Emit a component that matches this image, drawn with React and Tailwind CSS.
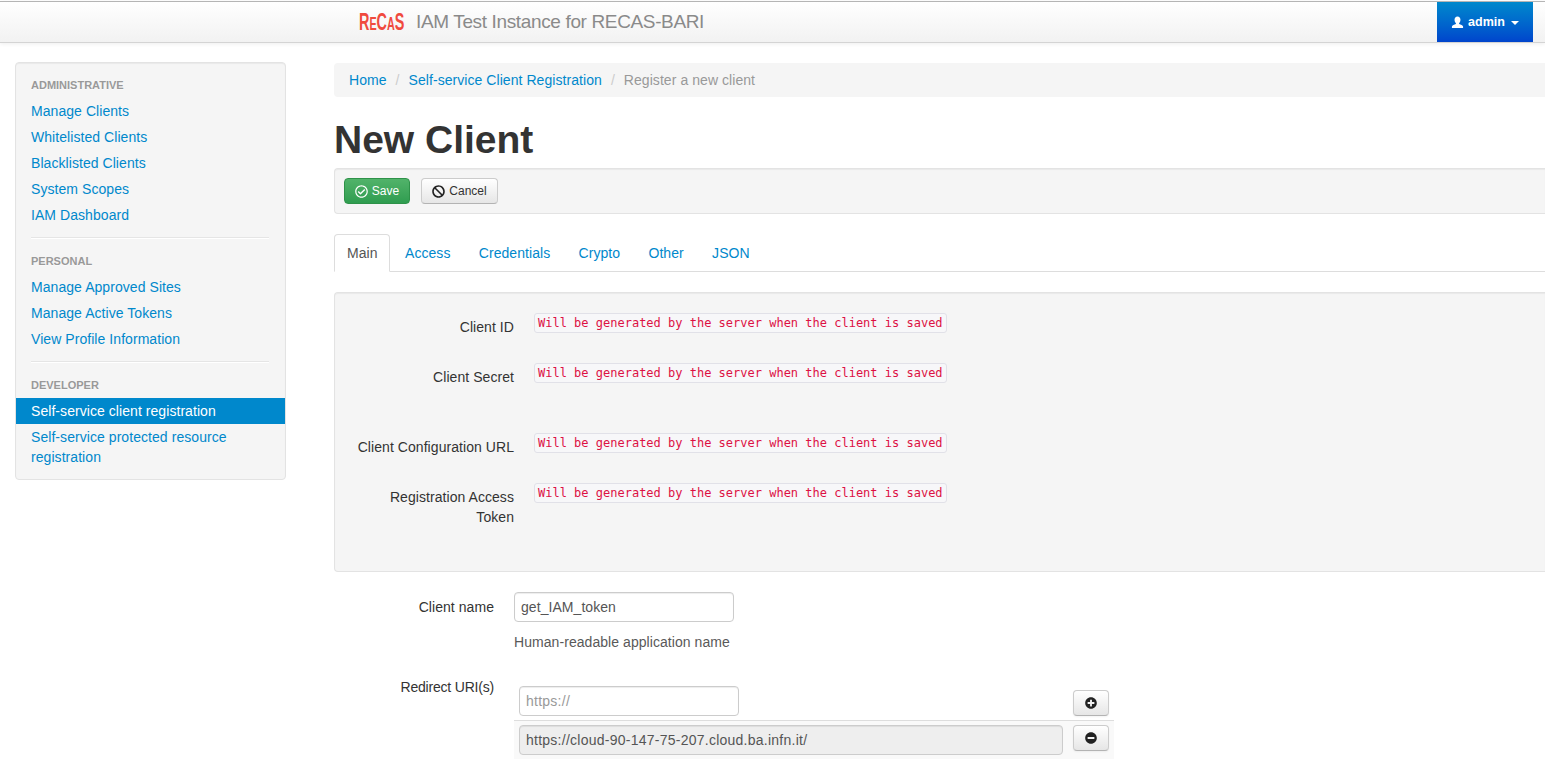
import { FaBan, FaMinusCircle, FaPlusCircle, FaRegCheckCircle } from 'react-icons/fa';

const sans = "font-['Liberation_Sans',Arial,sans-serif]";
const generated = 'Will be generated by the server when the client is saved';

const UserIcon = ({ className }) => (
	<svg viewBox="0 0 14 14" className={className} fill="currentColor">
		<path d="M7 0.5c-2 0-3.2 1.5-3.2 3.6 0 1.5 0.6 2.9 1.5 3.6v0.9c-1.6 0.7-4.3 1.4-4.3 2.8v1.6h12v-1.6c0-1.4-2.7-2.1-4.3-2.8v-0.9c0.9-0.7 1.5-2.1 1.5-3.6 0-2.1-1.2-3.6-3.2-3.6z" />
	</svg>
);

const NavHeader = ({ children }) => (
	<li className="h-[26px] px-[15px] text-[11px] leading-[26px] font-bold tracking-normal text-[#999] uppercase [text-shadow:0_1px_0_rgba(255,255,255,0.5)]">{children}</li>
);

const NavLink = ({ children, active }) => (
	<li className={`px-[15px] py-[3px] leading-5 ${active ? 'bg-[#0088cc] text-white' : 'text-[#0088cc]'}`}>{children}</li>
);

const Divider = () => <li className="my-[9px] mr-[16px] ml-[15px] h-[2px] border-t border-[#e5e5e5] bg-white"></li>;

const Sidebar = () => (
	<aside className="mt-[19px] ml-[15px] h-[418px] w-[271px] shrink-0 rounded border border-[#e3e3e3] bg-[#f5f5f5] pt-[9px] shadow-[inset_0_1px_1px_rgba(0,0,0,0.05)]">
		<ul>
			<NavHeader>Administrative</NavHeader>
			<NavLink>Manage Clients</NavLink>
			<NavLink>Whitelisted Clients</NavLink>
			<NavLink>Blacklisted Clients</NavLink>
			<NavLink>System Scopes</NavLink>
			<NavLink>IAM Dashboard</NavLink>
			<Divider />
			<NavHeader>Personal</NavHeader>
			<NavLink>Manage Approved Sites</NavLink>
			<NavLink>Manage Active Tokens</NavLink>
			<NavLink>View Profile Information</NavLink>
			<Divider />
			<NavHeader>Developer</NavHeader>
			<NavLink active>Self-service client registration</NavLink>
			<NavLink>Self-service protected resource registration</NavLink>
		</ul>
	</aside>
);

const ReadOnlyRow = ({ label, className }) => (
	<div className={`flex gap-5 ${className}`}>
		<div className="w-[179px] shrink-0 pt-[4px] pl-5 text-right leading-5 text-[#333]">{label}</div>
		<code className="h-5 rounded-[3px] border border-[#e1e1e8] bg-[#f7f7f9] px-[3px] font-['DejaVu_Sans_Mono',monospace] text-xs leading-[18px] tracking-normal text-[#dd1144]">{generated}</code>
	</div>
);

const SmallButton = ({ children, className }) => (
	<button className={`flex h-[26px] w-9 items-center justify-center rounded border border-[#ccc] border-b-[#b3b3b3] bg-gradient-to-b from-white to-[#e6e6e6] text-[#222] shadow-[inset_0_1px_0_rgba(255,255,255,0.2),0_1px_2px_rgba(0,0,0,0.05)] ${className}`}>{children}</button>
);

const App = () => {
	const tabs = ['Access', 'Credentials', 'Crypto', 'Other', 'JSON'];

	return (
		<div className={`h-[773px] overflow-hidden bg-white text-sm tracking-[0.06px] text-[#333] ${sans}`}>
			<header className="mt-px flex h-[42px] items-stretch border-t border-b border-t-[#b5b5b5] border-b-[#d4d4d4] bg-gradient-to-b from-white to-[#f2f2f2] shadow-[0_1px_4px_rgba(0,0,0,0.07)]">
				<div className="ml-[359px] flex items-center">
					<span className="w-[46px] origin-left scale-x-[0.6] text-[24px] leading-none font-bold tracking-normal whitespace-nowrap text-[#f04a3e]">
						R<span className="text-[18px]">E</span>C<span className="text-[18px]">A</span>S
					</span>
					<span className="ml-[11px] text-[19px] tracking-[-0.36px] text-[#8a8a8a]">IAM Test Instance for RECAS-BARI</span>
				</div>
				<button className="mr-3 ml-auto flex w-[96px] items-center justify-center gap-[3px] bg-gradient-to-b from-[#0088cc] to-[#0044cc] pt-px text-[12.5px] font-bold tracking-normal text-white">
					<UserIcon className="h-[13px] w-[13px]" />
					<span className="ml-px">admin</span>
					<span className="ml-[3px] h-0 w-0 border-x-4 border-t-4 border-x-transparent border-t-white"></span>
				</button>
			</header>

			<div className="flex">
				<Sidebar />
				<main className="mt-[20px] ml-12 min-w-0 flex-1">
					<nav className="flex h-[34px] items-center gap-[9px] rounded-l bg-[#f5f5f5] px-[15px]">
						<span className="text-[#0088cc]">Home</span>
						<span className="text-[#ccc]">/</span>
						<span className="text-[#0088cc]">Self-service Client Registration</span>
						<span className="text-[#ccc]">/</span>
						<span className="text-[#999]">Register a new client</span>
					</nav>

					<h1 className="mt-[23px] text-[39px] leading-10 font-bold tracking-normal text-[#333]">New Client</h1>

					<div className="mt-2 flex h-[46px] items-center gap-[11px] rounded-l border border-r-0 border-[#e3e3e3] bg-[#f5f5f5] pl-[9px] shadow-[inset_0_1px_1px_rgba(0,0,0,0.05)]">
						<button className="flex h-[26px] w-[66px] items-center justify-center gap-1 rounded border border-[#2e9249] bg-gradient-to-b from-[#51b36a] to-[#2f9d50] text-xs tracking-normal text-white">
							<FaRegCheckCircle className="h-[13px] w-[13px]" />
							Save
						</button>
						<button className="flex h-[26px] w-[77px] items-center justify-center gap-1 rounded border border-[#ccc] border-b-[#b3b3b3] bg-gradient-to-b from-white to-[#e6e6e6] text-xs tracking-normal text-[#333]">
							<FaBan className="h-[13px] w-[13px] text-[#222]" />
							Cancel
						</button>
					</div>

					<div className="mt-5 flex h-[38px] border-b border-[#ddd]">
						<div className="h-[38px] w-14 rounded-t border border-[#ddd] border-b-white bg-white px-3 leading-[37px] text-[#555]">Main</div>
						{tabs.map((tab, i) => (
							<div key={tab} className={`px-3 pt-px leading-[37px] text-[#0088cc] ${i === 0 ? 'ml-[3px]' : 'ml-[4.3px]'}`}>{tab}</div>
						))}
					</div>

					<div className="mt-5 h-[280px] rounded-l border border-r-0 border-[#e3e3e3] bg-[#f5f5f5] pt-5 shadow-[inset_0_1px_1px_rgba(0,0,0,0.05)]">
						<ReadOnlyRow label="Client ID" />
						<ReadOnlyRow label="Client Secret" className="mt-[26px]" />
						<ReadOnlyRow label="Client Configuration URL" className="mt-[46px]" />
						<ReadOnlyRow label="Registration Access Token" className="mt-[26px]" />
					</div>

					<div className="mt-5 flex gap-5">
						<div className="w-40 shrink-0 pt-[5px] text-right leading-5">Client name</div>
						<div>
							<input readOnly value="get_IAM_token" className="block h-[30px] w-[220px] rounded border border-[#ccc] px-1.5 text-[#555] shadow-[inset_0_1px_1px_rgba(0,0,0,0.075)] outline-none" />
							<p className="mt-[10px] leading-5 text-[#595959]">Human-readable application name</p>
						</div>
					</div>

					<div className="mt-[25px] flex gap-5">
						<div className="w-40 shrink-0 text-right leading-5 tracking-[-0.2px]">Redirect URI(s)</div>
						<div className="w-[600px] pt-[9px]">
							<div className="flex h-[34px] items-start pl-[5px]">
								<input readOnly placeholder="https://" className="h-[30px] w-[220px] rounded border border-[#ccc] px-1.5 tracking-[0.25px] text-[#555] shadow-[inset_0_1px_1px_rgba(0,0,0,0.075)] outline-none placeholder:text-[#999]" />
								<SmallButton className="mt-[4px] ml-[334px]"><FaPlusCircle className="h-3 w-3" /></SmallButton>
							</div>
							<div className="flex h-[39px] items-start gap-[10px] border-t border-[#ddd] bg-[#f9f9f9] pt-1 pl-[5px]">
								<input readOnly value="https://cloud-90-147-75-207.cloud.ba.infn.it/" className="h-[30px] w-[544px] rounded border border-[#ccc] bg-[#eeeeee] px-1.5 tracking-[0.25px] text-[#555] shadow-[inset_0_1px_1px_rgba(0,0,0,0.075)] outline-none" />
								<SmallButton><FaMinusCircle className="h-3 w-3" /></SmallButton>
							</div>
						</div>
					</div>
				</main>
			</div>
		</div>
	);
};

export default App;
